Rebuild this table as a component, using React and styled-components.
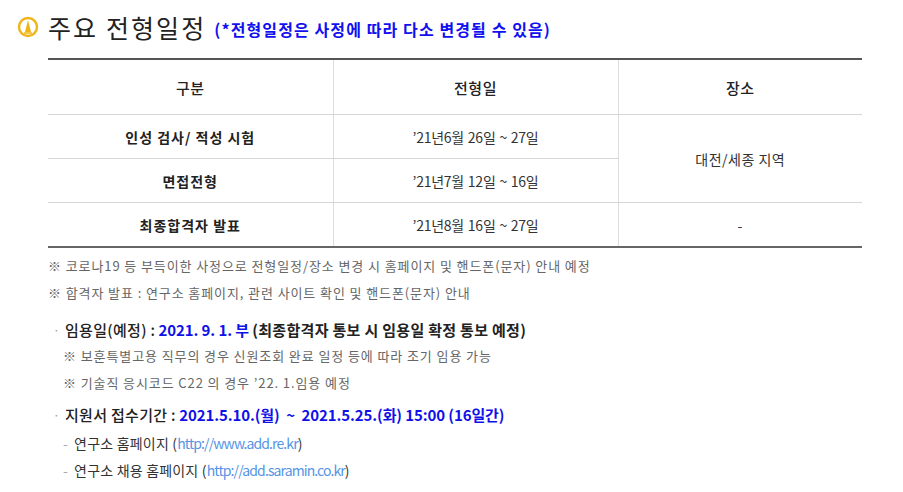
import React from "react";
import styled, { createGlobalStyle } from "styled-components";

const Global = createGlobalStyle`
  html, body { margin: 0; padding: 0; background: #fff; }
  body { font-family: "Noto Sans CJK KR", "Noto Sans", sans-serif; color: #333; }
`;

const Page = styled.div`
  width: 903px;
  padding: 12px 0 0 0;
  box-sizing: border-box;
`;

const TitleRow = styled.div`
  display: flex;
  align-items: center;
  height: 30px;
  padding-left: 17px;
`;

const Icon = styled.svg`
  width: 22px;
  height: 22px;
  margin-right: 9px;
  flex: none;
`;

const Title = styled.h2`
  margin: 0;
  font-size: 25px;
  font-weight: 400;
  color: #222;
  line-height: 30px;
  letter-spacing: 2.1px;
`;

const Sub = styled.span`
  margin-left: 8px;
  font-size: 16px;
  font-weight: 700;
  color: #1010f0;
  line-height: 30px;
  position: relative;
  top: 2px;
  letter-spacing: 1.1px;
`;

const Content = styled.div`
  margin-left: 48px;
  width: 814px;
`;

const Table = styled.table`
  margin-top: 16px;
  width: 814px;
  border-collapse: collapse;
  border-top: 2px solid #555;
  border-bottom: 2px solid #666;
  table-layout: fixed;
`;

const Th = styled.th`
  height: 54px;
  font-size: 15px;
  font-weight: 500;
  color: #222;
  text-align: center;
  letter-spacing: 0.5px;
  border-left: 1px solid #ddd;
  border-bottom: 1px solid #d6d6d6;
  &:first-child { border-left: none; }
  padding: 0;
`;

const Td = styled.td`
  height: 43px;
  font-size: 14px;
  font-weight: ${(p) => (p.$bold ? 700 : 400)};
  color: ${(p) => (p.$bold ? "#222" : "#333")};
  letter-spacing: ${(p) => (p.$bold ? "1px" : p.$narrow ? "-0.25px" : "0.5px")};
  word-spacing: ${(p) => (p.$narrow ? "1px" : "0")};
  text-align: center;
  border-left: 1px solid #ddd;
  border-bottom: 1px solid #d6d6d6;
  padding: 0;
  &:first-child { border-left: none; }
`;

const Notes = styled.div`
  margin-top: 4px;
`;

const Note = styled.p`
  margin: 0;
  font-size: 13px;
  line-height: 27px;
  color: #666;
  letter-spacing: 0.9px;
  padding-left: ${(p) => (p.$indent ? "15px" : "0")};
`;

const Item = styled.div`
  margin-top: ${(p) => p.$mt || "0"};
`;

const ItemHead = styled.div`
  display: flex;
  align-items: center;
  font-size: 15px;
  line-height: 24px;
  color: #222;
  letter-spacing: 0.3px;
`;

const Dot = styled.span`
  display: inline-block;
  box-sizing: border-box;
  width: 17px;
  color: #999;
  font-size: 12px;
  padding-left: 5px;
`;

const Label = styled.span`
  font-weight: 500;
`;

const Blue = styled.span`
  color: #1010e8;
  font-weight: 700;
  white-space: pre;
  letter-spacing: -0.1px;
`;

const Bold = styled.span`
  font-weight: 700;
  white-space: pre;
`;

const Links = styled.div`
  padding-top: 3px;
`;

const LinkLine = styled.p`
  margin: 0;
  font-size: 14px;
  line-height: 27px;
  color: #333;
  padding-left: 15px;
  letter-spacing: 0.2px;
`;

const Dash = styled.span`
  color: #aaa;
  margin-right: 6px;
`;

const Link = styled.span`
  color: #5595e4;
  letter-spacing: -0.9px;
`;

export default function App() {
  return (
    <>
      <Global />
      <Page>
        <TitleRow>
          <Icon viewBox="0 0 22 22">
            <circle cx="11" cy="11" r="9" fill="none" stroke="#f0b416" strokeWidth="2.4" />
            <path d="M11 4 L8 16 L14 16 Z" fill="#f0b416" />
            <path d="M7 17 L15 17" stroke="#f0b416" strokeWidth="1.5" />
          </Icon>
          <Title>주요 전형일정</Title>
          <Sub>(*전형일정은 사정에 따라 다소 변경될 수 있음)</Sub>
        </TitleRow>
        <Content>
          <Table>
            <colgroup>
              <col style={{ width: "285px" }} />
              <col style={{ width: "285px" }} />
              <col style={{ width: "244px" }} />
            </colgroup>
            <thead>
              <tr>
                <Th>구분</Th>
                <Th>전형일</Th>
                <Th>장소</Th>
              </tr>
            </thead>
            <tbody>
              <tr>
                <Td $bold>인성 검사/ 적성 시험</Td>
                <Td $narrow>’21년6월 26일 ~ 27일</Td>
                <Td rowSpan={2}>대전/세종 지역</Td>
              </tr>
              <tr>
                <Td $bold>면접전형</Td>
                <Td $narrow>’21년7월 12일 ~ 16일</Td>
              </tr>
              <tr>
                <Td $bold>최종합격자 발표</Td>
                <Td $narrow>’21년8월 16일 ~ 27일</Td>
                <Td>-</Td>
              </tr>
            </tbody>
          </Table>
          <Notes>
            <Note>※ 코로나19 등 부득이한 사정으로 전형일정/장소 변경 시 홈페이지 및 핸드폰(문자) 안내 예정</Note>
            <Note>※ 합격자 발표 : 연구소 홈페이지, 관련 사이트 확인 및 핸드폰(문자) 안내</Note>
          </Notes>
          <Item $mt="12px">
            <ItemHead>
              <Dot>·</Dot>
              <Label>임용일(예정) : </Label>
              <Blue> 2021. 9. 1. 부 </Blue>
              <Bold>(최종합격자 통보 시 임용일 확정 통보 예정)</Bold>
            </ItemHead>
            <Note $indent>※ 보훈특별고용 직무의 경우 신원조회 완료 일정 등에 따라 조기 임용 가능</Note>
            <Note $indent>※ 기술직 응시코드 C22 의 경우 ’22. 1.임용 예정</Note>
          </Item>
          <Item $mt="7px">
            <ItemHead>
              <Dot>·</Dot>
              <Label>지원서 접수기간 : </Label>
              <Blue> 2021.5.10.(월)  ~  2021.5.25.(화) 15:00 (16일간)</Blue>
            </ItemHead>
            <Links>
              <LinkLine>
                <Dash>-</Dash>연구소 홈페이지 (<Link>http://www.add.re.kr</Link>)
              </LinkLine>
              <LinkLine>
                <Dash>-</Dash>연구소 채용 홈페이지 (<Link>http://add.saramin.co.kr</Link>)
              </LinkLine>
            </Links>
          </Item>
        </Content>
      </Page>
    </>
  );
}
